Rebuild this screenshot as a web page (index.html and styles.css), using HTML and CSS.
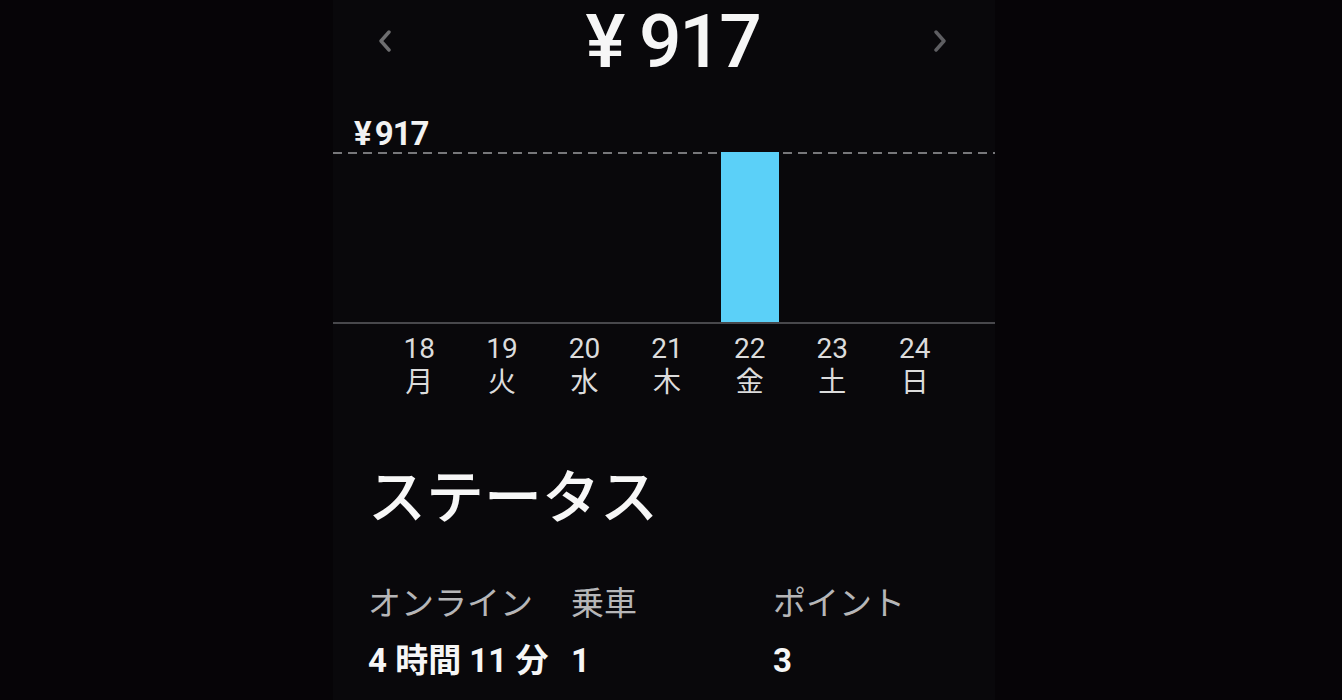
FILE: index.html
```html
<!DOCTYPE html>
<html lang="ja">
<head>
<meta charset="utf-8">
<title>ステータス</title>
<link rel="stylesheet" href="styles.css">
</head>
<body>
<div class="screen">
  <header class="header">
    <svg class="chev" width="16" height="22" viewBox="0 0 16 22"><path d="M12 2 L4 11 L12 20" fill="none" stroke="#6e6e70" stroke-width="3.4" stroke-linecap="round" stroke-linejoin="round"/></svg>
    <div class="amount">¥ 917</div>
    <svg class="chev" width="16" height="22" viewBox="0 0 16 22"><path d="M4 2 L12 11 L4 20" fill="none" stroke="#5e5e62" stroke-width="3.4" stroke-linecap="round" stroke-linejoin="round"/></svg>
  </header>

  <div class="max-label"><span class="yen">¥</span>917</div>
  <div class="dash"></div>
  <div class="bars">
    <div class="cell"></div>
    <div class="cell"></div>
    <div class="cell"></div>
    <div class="cell"></div>
    <div class="cell"><div class="bar"></div></div>
    <div class="cell"></div>
    <div class="cell"></div>
  </div>
  <div class="baseline"></div>

  <div class="days">
    <div class="day"><div class="num">18</div><div class="wd">月</div></div>
    <div class="day"><div class="num">19</div><div class="wd">火</div></div>
    <div class="day"><div class="num">20</div><div class="wd">水</div></div>
    <div class="day"><div class="num">21</div><div class="wd">木</div></div>
    <div class="day"><div class="num">22</div><div class="wd">金</div></div>
    <div class="day"><div class="num">23</div><div class="wd">土</div></div>
    <div class="day"><div class="num">24</div><div class="wd">日</div></div>
  </div>

  <h2 class="status-title">ステータス</h2>

  <div class="stats">
    <div class="stat-label">オンライン</div>
    <div class="stat-label">乗車</div>
    <div class="stat-label">ポイント</div>
    <div class="stat-value">4 時間 11 分</div>
    <div class="stat-value">1</div>
    <div class="stat-value">3</div>
  </div>
</div>
</body>
</html>
```

FILE: styles.css
```css
html, body {
  margin: 0;
  padding: 0;
  background: #060407;
  height: 100%;
  overflow: hidden;
}

body {
  font-family: Roboto, "Noto Sans CJK JP", sans-serif;
  color: #f4f4f4;
}

.screen {
  margin-left: 333px;
  width: 662px;
  height: 700px;
  background: #09080b;
  overflow: hidden;
}

.header {
  height: 82px;
  display: flex;
  align-items: center;
  padding: 0 47px 0 44px;
}

.chev {
  flex: none;
  display: block;
}

.amount {
  flex: 1;
  text-align: center;
  padding-left: 20px;
  font-size: 75px;
  font-weight: 500;
  letter-spacing: -2.5px;
  line-height: 76px;
  color: #f6f6f6;
}

.max-label {
  margin-top: 35px;
  padding-left: 21px;
  height: 34px;
  line-height: 34px;
  font-size: 33px;
  font-weight: 700;
  letter-spacing: -1px;
  color: #f2f2f2;
}

.yen {
  margin-right: 4px;
}

.dash {
  margin-top: 1px;
  height: 2px;
  background: repeating-linear-gradient(to right, #77777a 0 9px, transparent 9px 15px);
}

.bars {
  height: 168px;
  display: grid;
  grid-template-columns: repeat(7, 82.6px);
  padding-left: 45px;
}

.cell {
  display: flex;
  justify-content: center;
}

.bar {
  width: 58px;
  margin-top: -2px;
  height: 170px;
  background: #5bd0f8;
}

.baseline {
  height: 2px;
  background: #48484c;
}

.days {
  display: grid;
  grid-template-columns: repeat(7, 82.6px);
  padding-left: 45px;
  margin-top: 10px;
  color: #dcdcdc;
  font-size: 28px;
  text-align: center;
}

.num {
  line-height: 30px;
}

.wd {
  margin-top: 4px;
  line-height: 30px;
}

.status-title {
  margin: 68px 0 0;
  padding-left: 35px;
  font-size: 58px;
  line-height: 64px;
  font-weight: 500;
  color: #f7f7f7;
}

.stats {
  display: grid;
  grid-template-columns: 203px 202px 1fr;
  grid-template-rows: 36px 36px;
  row-gap: 21px;
  padding-left: 35px;
  margin-top: 56px;
}

.stat-label {
  font-size: 33px;
  line-height: 36px;
  color: #b6b6b8;
}

.stat-value {
  font-size: 33px;
  line-height: 36px;
  font-weight: 700;
  color: #f6f6f6;
}
```
